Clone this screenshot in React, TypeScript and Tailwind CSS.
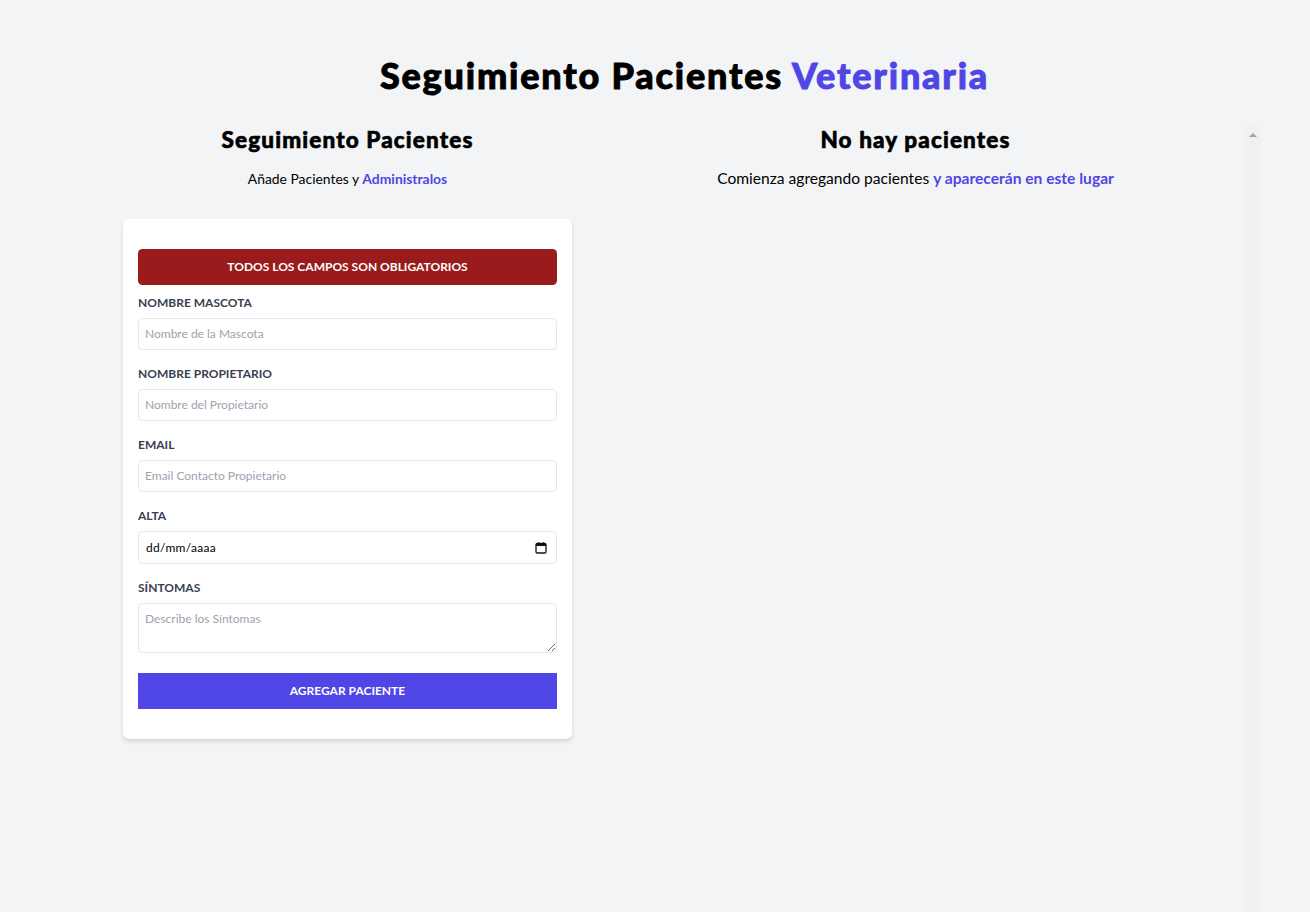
import React from 'react'

type Field = {
  id: string
  label: string
  placeholder: string
}

const fields: Field[] = [
  { id: 'mascota', label: 'Nombre Mascota', placeholder: 'Nombre de la Mascota' },
  { id: 'propietario', label: 'Nombre Propietario', placeholder: 'Nombre del Propietario' },
  { id: 'email', label: 'Email', placeholder: 'Email Contacto Propietario' },
]

function Header() {
  return (
    <h1 className="pt-[57px] text-center text-[36px] leading-none font-black tracking-[0.05em] text-black [-webkit-text-stroke-width:0.9px]">
      Seguimiento Pacientes <span className="text-[#4f46e5]">Veterinaria</span>
    </h1>
  )
}

function CalendarIcon() {
  return (
    <svg width="12" height="12" viewBox="0 0 12 12" className="shrink-0">
      <rect x="1" y="1.5" width="10" height="9.5" rx="1.2" fill="none" stroke="#111" strokeWidth="1.3" />
      <rect x="1" y="1.5" width="10" height="2.5" fill="#111" />
      <rect x="3" y="0.3" width="1.3" height="2" fill="#111" />
      <rect x="7.7" y="0.3" width="1.3" height="2" fill="#111" />
    </svg>
  )
}

function Formulario() {
  return (
    <div className="mx-[15px] w-[449px] shrink-0">
      <h2 className="text-center text-[22.5px] leading-[27px] font-black tracking-[0.05em] text-black [-webkit-text-stroke-width:0.6px]">
        Seguimiento Pacientes
      </h2>
      <p className="mt-[15px] mb-[30px] text-center text-[13.9px] leading-[21px] text-black">
        Añade Pacientes y <span className="font-bold text-[#4f46e5]">Administralos</span>
      </p>

      <form className="mb-[30px] rounded-[6px] bg-white px-[15px] py-[30px] text-[12px] leading-[18px] shadow-[0_3px_4.5px_-0.75px_rgba(0,0,0,0.1),0_1.5px_3px_-1.5px_rgba(0,0,0,0.1)]">
        <div className="mb-[9px] rounded-[4.5px] bg-[#991b1b] p-[9px] text-center font-bold text-white uppercase">
          Todos los campos son obligatorios
        </div>

        {fields.map((f) => (
          <div key={f.id} className="mb-[15px]">
            <label htmlFor={f.id} className="block font-bold text-[#374151] uppercase">
              {f.label}
            </label>
            <input
              id={f.id}
              type="text"
              placeholder={f.placeholder}
              className="mt-[6px] block w-full rounded-[4.5px] border border-[#e5e7eb] p-[6px] text-[12px] leading-[18px] placeholder:text-[#9ca3af] focus:outline-none"
            />
          </div>
        ))}

        <div className="mb-[15px]">
          <label htmlFor="alta" className="block font-bold text-[#374151] uppercase">
            Alta
          </label>
          <div
            id="alta"
            className="mt-[6px] flex h-[33px] w-full items-center justify-between rounded-[4.5px] border border-[#e5e7eb] pr-[9px] pl-[7px] text-black"
          >
            <span className="tracking-[0.3px]">dd/mm/aaaa</span>
            <CalendarIcon />
          </div>
        </div>

        <div className="mb-[20px]">
          <label htmlFor="sintomas" className="block font-bold text-[#374151] uppercase">
            Síntomas
          </label>
          <textarea
            id="sintomas"
            placeholder="Describe los Síntomas"
            className="mt-[6px] block h-[50px] w-full rounded-[4.5px] border border-[#e5e7eb] p-[6px] text-[12px] leading-[18px] placeholder:text-[#9ca3af] focus:outline-none"
          />
        </div>

        <button
          type="submit"
          className="block w-full cursor-pointer bg-[#4f46e5] p-[9px] font-bold text-white uppercase hover:bg-[#4338ca]"
        >
          Agregar Paciente
        </button>
      </form>
    </div>
  )
}

function ListadoPacientes() {
  return (
    <div className="flex h-[912px] w-[674px] shrink-0">
      <div className="flex-1">
        <h2 className="text-center text-[22.5px] leading-[27px] font-black tracking-[0.05em] text-black [-webkit-text-stroke-width:0.6px]">
          No hay pacientes
        </h2>
        <p className="mt-[15px] mb-[30px] text-center text-[15.6px] leading-[21px] text-black">
          Comienza agregando pacientes <span className="font-bold text-[#4f46e5]">y aparecerán en este lugar</span>
        </p>
      </div>
      {/* scroll track */}
      <div className="flex w-[17px] justify-center bg-[#f1f1f1] pt-[7px]">
        <svg width="8" height="4" viewBox="0 0 8 4">
          <path d="M4 0 L8 4 L0 4 Z" fill="#a3a3a3" />
        </svg>
      </div>
    </div>
  )
}

export default function App() {
  return (
    <div className="h-screen overflow-hidden bg-[#f3f4f6] font-['Lato','Noto_Sans',sans-serif]">
      <div className="ml-[108px] w-[1153px]">
        <Header />
        <div className="mt-[33px] flex">
          <Formulario />
          <ListadoPacientes />
        </div>
      </div>
    </div>
  )
}
